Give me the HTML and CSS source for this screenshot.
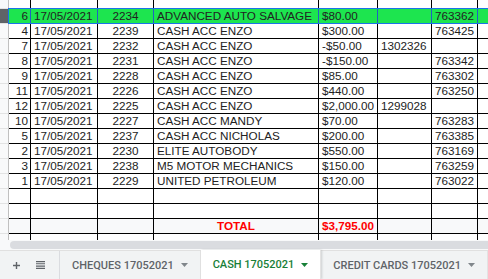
FILE: index.html
```html
<!DOCTYPE html>
<html lang="en">
<head>
  <meta charset="UTF-8" />
  <title>CASH 17052021</title>
  <link rel="stylesheet" href="styles.css">
</head>
<body>

  <div class="sheet">
    <div class="row top">
      <div class="hd"></div><div></div><div></div><div></div><div></div><div></div><div></div><div></div><div></div>
    </div>
    <div class="row sel">
      <div class="hd"></div><div class="num">6</div><div>17/05/2021</div><div class="mid">2234</div><div>ADVANCED AUTO SALVAGE</div><div>$80.00</div><div></div><div>763362</div><div></div>
    </div>
    <div class="row">
      <div class="hd"></div><div class="num">4</div><div>17/05/2021</div><div class="mid">2239</div><div>CASH ACC ENZO</div><div>$300.00</div><div></div><div>763425</div><div></div>
    </div>
    <div class="row">
      <div class="hd"></div><div class="num">7</div><div>17/05/2021</div><div class="mid">2232</div><div>CASH ACC ENZO</div><div>-$50.00</div><div>1302326</div><div></div><div></div>
    </div>
    <div class="row">
      <div class="hd"></div><div class="num">8</div><div>17/05/2021</div><div class="mid">2231</div><div>CASH ACC ENZO</div><div>-$150.00</div><div></div><div>763342</div><div></div>
    </div>
    <div class="row">
      <div class="hd"></div><div class="num">9</div><div>17/05/2021</div><div class="mid">2228</div><div>CASH ACC ENZO</div><div>$85.00</div><div></div><div>763302</div><div></div>
    </div>
    <div class="row">
      <div class="hd"></div><div class="num">11</div><div>17/05/2021</div><div class="mid">2226</div><div>CASH ACC ENZO</div><div>$440.00</div><div></div><div>763250</div><div></div>
    </div>
    <div class="row">
      <div class="hd"></div><div class="num">12</div><div>17/05/2021</div><div class="mid">2225</div><div>CASH ACC ENZO</div><div>$2,000.00</div><div>1299028</div><div></div><div></div>
    </div>
    <div class="row">
      <div class="hd"></div><div class="num">10</div><div>17/05/2021</div><div class="mid">2227</div><div>CASH ACC MANDY</div><div>$70.00</div><div></div><div>763283</div><div></div>
    </div>
    <div class="row">
      <div class="hd"></div><div class="num">5</div><div>17/05/2021</div><div class="mid">2237</div><div>CASH ACC NICHOLAS</div><div>$200.00</div><div></div><div>763385</div><div></div>
    </div>
    <div class="row">
      <div class="hd"></div><div class="num">2</div><div>17/05/2021</div><div class="mid">2230</div><div>ELITE AUTOBODY</div><div>$550.00</div><div></div><div>763169</div><div></div>
    </div>
    <div class="row">
      <div class="hd"></div><div class="num">3</div><div>17/05/2021</div><div class="mid">2238</div><div>M5 MOTOR MECHANICS</div><div>$150.00</div><div></div><div>763259</div><div></div>
    </div>
    <div class="row">
      <div class="hd"></div><div class="num">1</div><div>17/05/2021</div><div class="mid">2229</div><div>UNITED PETROLEUM</div><div>$120.00</div><div></div><div>763022</div><div></div>
    </div>
    <div class="row">
      <div class="hd"></div><div></div><div></div><div></div><div></div><div></div><div></div><div></div><div></div>
    </div>
    <div class="row">
      <div class="hd"></div><div></div><div></div><div></div><div></div><div></div><div></div><div></div><div></div>
    </div>
    <div class="row total">
      <div class="hd"></div><div></div><div></div><div></div><div class="mid red">TOTAL</div><div class="red">$3,795.00</div><div></div><div></div><div></div>
    </div>
    <div class="row">
      <div class="hd"></div><div></div><div></div><div></div><div></div><div></div><div></div><div></div><div></div>
    </div>
  </div>

  <div class="hscroll"><div class="thumb"></div></div>

  <div class="tabbar">
    <div class="tools">
      <svg width="7" height="7" viewBox="0 0 7 7"><path d="M3.5 0v7M0 3.5h7" stroke="#5f6368" stroke-width="1.4"/></svg>
      <svg width="9" height="8" viewBox="0 0 9 8"><path d="M0 0.6h9M0 2.8h9M0 5.1h9M0 7.4h9" stroke="#5f6368" stroke-width="1.1"/></svg>
    </div>
    <div class="tab">
      <span>CHEQUES 17052021</span>
      <svg width="7" height="4" viewBox="0 0 7 4"><path d="M0 0h7L3.5 4z" fill="#80868b"/></svg>
    </div>
    <div class="tab active">
      <span>CASH 17052021</span>
      <svg width="7" height="4" viewBox="0 0 7 4"><path d="M0 0h7L3.5 4z" fill="#188038"/></svg>
    </div>
    <div class="tab">
      <span>CREDIT CARDS 17052021</span>
      <svg width="7" height="4" viewBox="0 0 7 4"><path d="M0 0h7L3.5 4z" fill="#80868b"/></svg>
    </div>
  </div>

</body>
</html>
```

FILE: styles.css
```css
body {
  margin: 0;
  width: 488px;
  height: 279px;
  overflow: hidden;
  background: #fff;
  font-family: "Liberation Sans", Arial, sans-serif;
}
.sheet {
  height: 240px;
  overflow: hidden;
}
.row {
  display: grid;
  grid-template-columns: 9px 22px 67px 56px 165px 59px 54px 46px 60px;
  height: 15px;
}
.row.top {
  height: 9px;
}
.row > div {
  box-sizing: border-box;
  border-right: 1px solid #000;
  border-bottom: 1px solid #000;
  padding: 0 3px;
  font-size: 11.7px;
  line-height: 14px;
  color: #222;
  white-space: nowrap;
  overflow: hidden;
}
.row > .hd {
  padding: 0;
  background: #f8f9fa;
  border-right-color: #c0c0c0;
  border-bottom-color: #e2e3e3;
}
.row > .num {
  text-align: right;
  padding: 0 2px 0 0;
}
.row > .mid {
  text-align: center;
}
.row > .red {
  color: #ff0000;
  font-weight: bold;
}
.row.total > div {
  background: #f8f9fa;
}
.row.sel {
  position: relative;
}
.row.sel > div {
  background: #1de54f;
  border-right-color: #2160c4;
}
.row.sel > .hd {
  background: #5f6368;
}
.row.sel::after {
  content: "";
  position: absolute;
  top: -1px;
  left: 8px;
  right: 0;
  bottom: 0;
  border: 1px solid #1a73e8;
  border-right: none;
  pointer-events: none;
}
.hscroll {
  height: 10px;
  background: #f8f9fa;
  padding-top: 1px;
  box-sizing: border-box;
}
.thumb {
  margin-left: 10px;
  height: 8px;
  border-radius: 4px;
  background: #dadce0;
  width: 500px;
}
.tabbar {
  display: flex;
  height: 29px;
  background: #f1f3f4;
  border-top: 1px solid #e0e0e0;
  box-sizing: border-box;
  font-family: Roboto, "Liberation Sans", sans-serif;
  font-size: 11px;
  font-weight: 500;
  color: #5f6368;
}
.tools {
  display: flex;
  align-items: center;
  gap: 16px;
  width: 62px;
  padding-left: 13px;
  box-sizing: border-box;
  border-right: 1px solid #dadce0;
}
.tab {
  display: flex;
  align-items: center;
  gap: 7px;
  padding: 0 12px;
  white-space: nowrap;
  border-right: 1px solid #e3e3e3;
}
.tab.active {
  background: #fff;
  color: #188038;
  margin-top: -1px;
  box-shadow: 1px 0 2px rgba(60, 64, 67, 0.2);
}
```
